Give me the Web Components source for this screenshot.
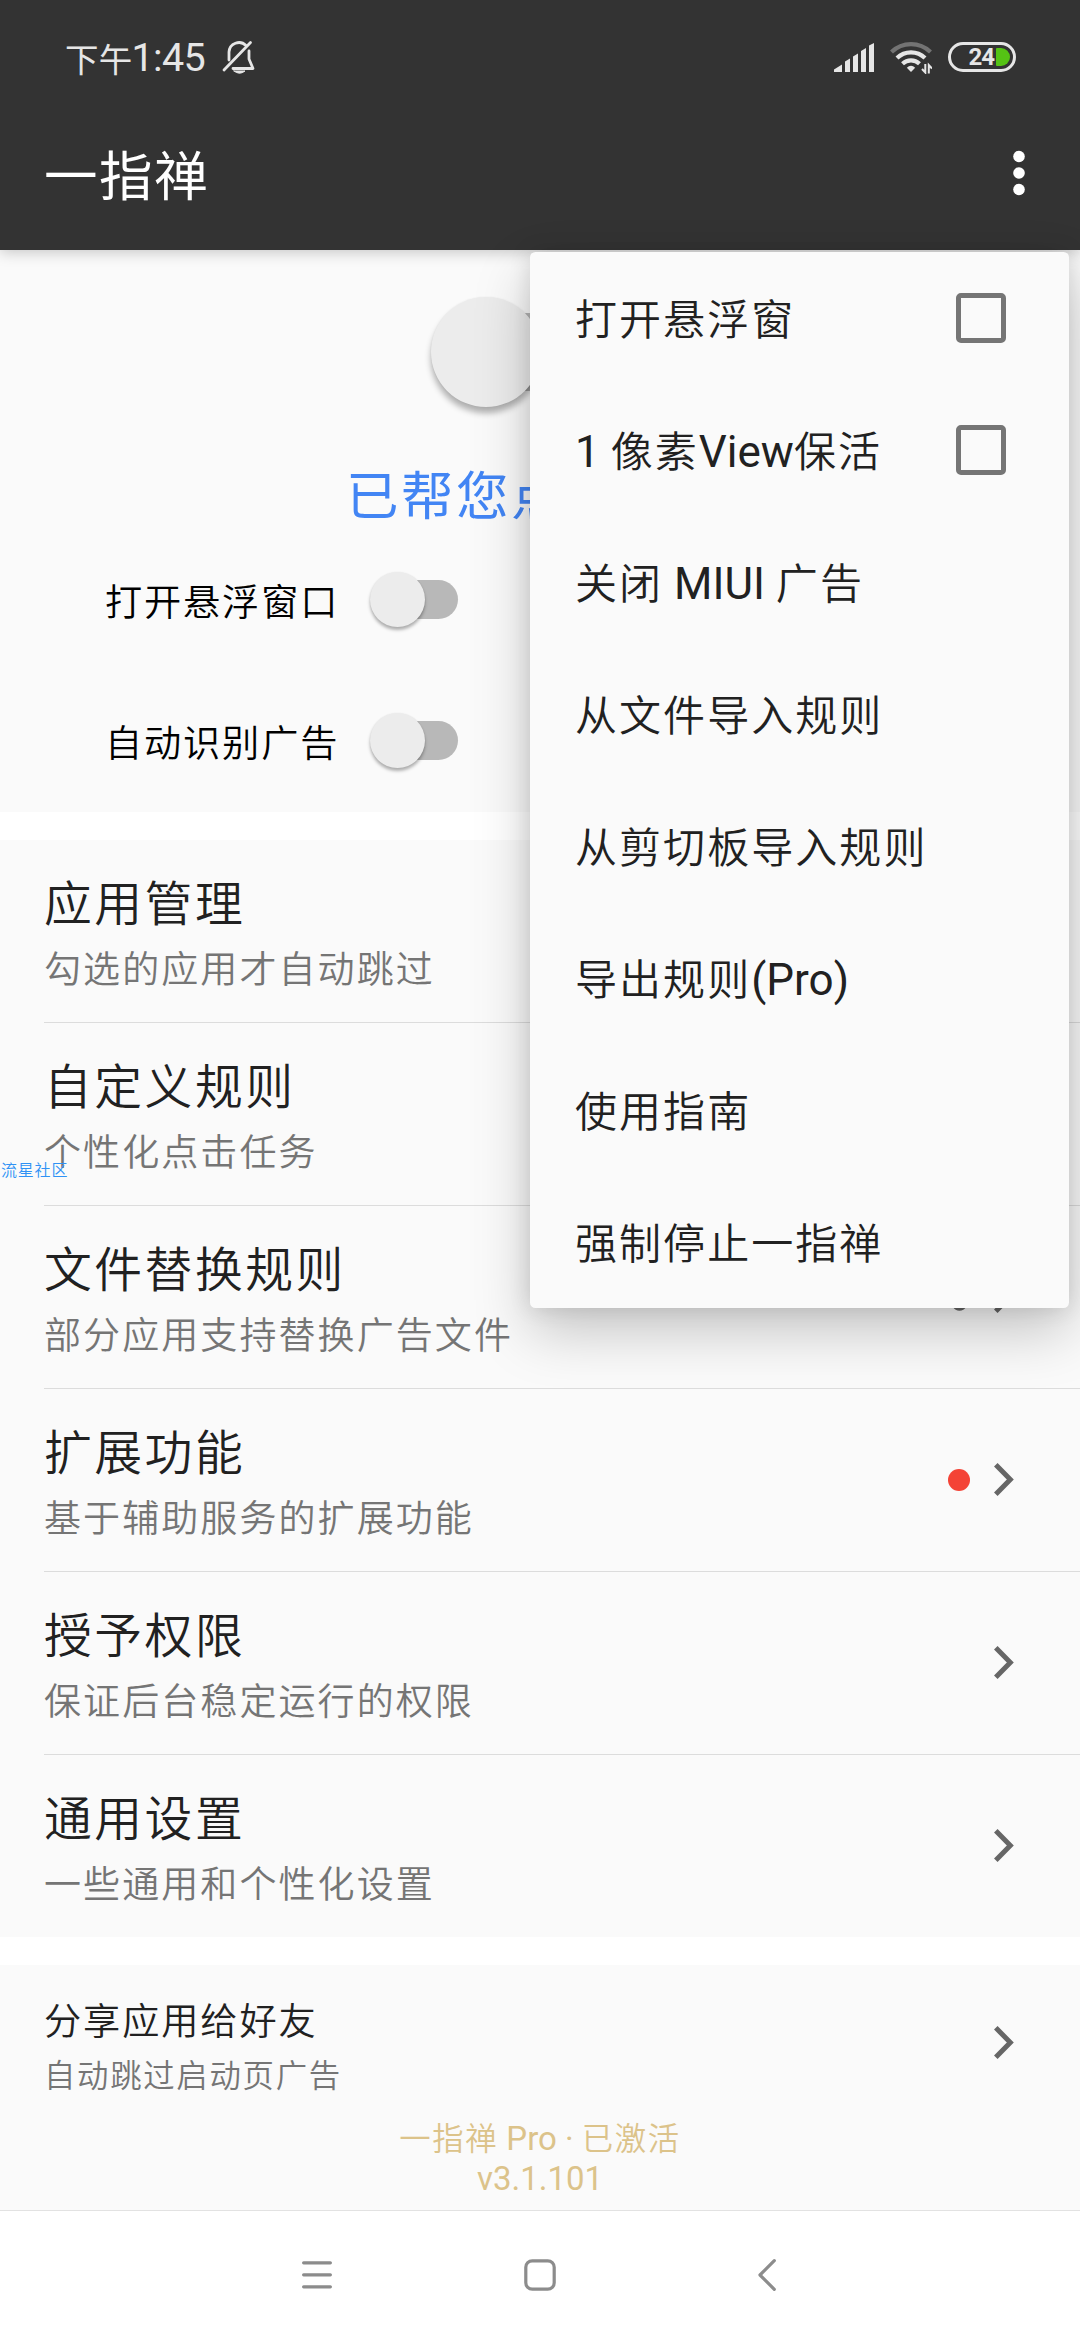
<!DOCTYPE html>
<html lang="zh-CN">
<head>
<meta charset="utf-8">
<title>一指禅</title>
<style>
body{margin:0;background:#fff;font-family:"Noto Sans CJK SC",Roboto,sans-serif;font-weight:350;color:#212121;width:1080px;height:2340px;overflow:hidden}
</style>
</head>
<body>
<app-screen></app-screen>
<script>
const define = (name, html) => {
  const t = document.createElement('template');
  t.innerHTML = html;
  customElements.define(name, class extends HTMLElement {
    constructor() {
      super();
      this.attachShadow({ mode: 'open' }).appendChild(t.content.cloneNode(true));
    }
  });
};

// Latin run set in Roboto inside a CJK line
define('latin-run', `<style>:host{display:inline;font-family:Roboto,sans-serif;font-weight:400;font-size:var(--latin,44px);letter-spacing:0;line-height:0;white-space:pre}</style><slot></slot>`);

define('status-bar', `<style>
:host{display:flex;align-items:center;box-sizing:border-box;height:96px;padding:18px 64px 0 65px;color:#e6e6e6}
.time{display:flex;align-items:center;font-size:33.500px;letter-spacing:.300px;font-weight:400;line-height:40px;margin-top:2px}
.time b{font:400 39.500px/40px Roboto,sans-serif;letter-spacing:-.700px;margin-left:-1px}
.bell{margin-left:17px}
.right{margin-left:auto;display:flex;align-items:center}
svg{display:block}
.bat{box-sizing:border-box;width:68px;height:30px;border:3px solid #e6e6e6;border-radius:15px;display:flex;align-items:center;justify-content:flex-end;padding-right:3px;margin-left:16px}
.bat span{font:700 24px/24px Roboto,sans-serif;letter-spacing:-1px;color:#e6e6e6;margin-right:2px}
.bat i{width:14px;height:18px;background:#55c314;border-radius:1px 9px 9px 1px}
</style>
<div class="time">下午<b>1:45</b></div>
<svg class="bell" width="34" height="34" viewBox="0 0 34 34" fill="none" stroke="#e6e6e6" stroke-width="2.8" stroke-linecap="round" stroke-linejoin="round">
<path d="M7 20V12A10 10 0 0 1 24 5.5"/><path d="M27 11V19L31 28.5H11" /><path d="M2 30L28.5 2.5"/><path d="M12 31H23Q17.500 35.500 12 31Z" fill="#e6e6e6" stroke-width="1"/></svg>
<div class="right">
<svg width="40" height="29" viewBox="0 0 40 29" fill="#e6e6e6"><path d="M0 29V26.500L8 21.500V29ZM11 29V18.500L16 15.500V29ZM19 29V13.500L24 10.500V29ZM27 29V8L32 5V29ZM35 29V2.500L40 0V29Z"/></svg>
<svg style="margin-left:16px" width="42" height="33" viewBox="0 0 42 33" fill="none" stroke="#e6e6e6" stroke-width="4.200">
<path d="M1.500 11A28 28 0 0 1 40.500 11" stroke="#737373"/><path d="M7 17A20 20 0 0 1 35 17"/><path d="M12.500 22.800A12.500 12.500 0 0 1 29.500 22.800"/><path d="M21 31L16.800 26.800Q21 22.500 25.200 26.800Z" fill="#e6e6e6" stroke="none"/>
<path d="M35.300 23V31.500L32 28M38.800 32.500V24L42 27.500" stroke-width="2"/></svg>
<div class="bat"><span>24</span><i></i></div>
</div>`);

define('app-bar', `<style>
:host{display:block;height:250px;background:#333;color:#fff;position:relative;z-index:1;box-shadow:0 2px 14px rgba(0,0,0,.22)}
.bar{display:flex;align-items:center;justify-content:space-between;height:154px;padding:0 55px 0 44px}
h1{margin:0;font-weight:400;font-size:53.500px;letter-spacing:1.600px;line-height:80px}
svg{display:block}
</style>
<status-bar></status-bar>
<div class="bar"><h1><slot></slot></h1>
<svg width="12" height="46" fill="#fff"><circle cx="6" cy="6.500" r="5.800"/><circle cx="6" cy="23" r="5.800"/><circle cx="6" cy="39.500" r="5.800"/></svg></div>`);

define('toggle-switch', `<style>
:host{--d:55px;display:flex;align-items:center;width:calc(var(--d)*1.600);height:var(--d)}
.track{display:flex;align-items:center;width:calc(var(--d)*1.100);height:calc(var(--d)*.709);margin-left:calc(var(--d)*.500);border-radius:0 99px 99px 0;background:#b8b8b8}
.thumb{flex:none;width:var(--d);height:var(--d);margin-left:calc(var(--d)*-.500);border-radius:50%;background:#ececec;box-shadow:0 calc(var(--d)*.055) calc(var(--d)*.060) rgba(0,0,0,.3),0 0 2px rgba(0,0,0,.060)}
</style><div class="track"><div class="thumb"></div></div>`);

define('switch-row', `<style>
:host{display:flex;align-items:center;height:141px;padding-left:105px;color:#000;font-size:37.200px;letter-spacing:1.850px;line-height:50px}
.l{width:264.500px;padding-top:1px}
toggle-switch{margin-top:1px}
</style><div class="l"><slot></slot></div><toggle-switch></toggle-switch>`);

define('main-panel', `<style>
:host{display:flex;flex-direction:column;height:562px;background:#fafafa}
.big{--d:110px;margin:47px 0 0 431px}
.count{color:#4285f4;font-weight:400;font-size:52.500px;letter-spacing:2.500px;line-height:70px;margin:50px 0 5.500px 346px}
.first{margin-top:-4px}
</style>
<toggle-switch class="big"></toggle-switch><div class="count">已帮您点</div>
<switch-row class="first">打开悬浮窗口</switch-row><switch-row>自动识别广告</switch-row>`);

define('chevron-icon', `<style>:host{display:block;padding-bottom:1px}svg{display:block}</style><svg width="20" height="33" viewBox="0 0 20 33" fill="none" stroke="#666" stroke-width="5"><path d="M1.800 1.800L16.300 16.500L1.800 31.200"/></svg>`);

define('list-row', `<style>
:host{display:flex;align-items:center;height:182px;padding-right:66px;margin-left:44px}
:host([line]){border-bottom:1px solid #dcdcdc}
.t{flex:1;align-self:flex-start;padding-top:31px}
.a{font-size:47.800px;letter-spacing:2.500px;line-height:60px}
.b{font-size:37px;letter-spacing:2.080px;line-height:48px;margin-top:12px;color:#757575}
.m{margin-right:24px}
:host([compact]){height:156px}
:host([compact]) .t{padding-top:30px}
:host([compact]) .a{font-size:37.200px;letter-spacing:1.900px;line-height:48px}
:host([compact]) .b{font-size:31.400px;letter-spacing:1.700px;line-height:40px;margin-top:11px}
</style><div class="t"><div class="a"><slot></slot></div><div class="b"><slot name="sub"></slot></div></div><div class="m"><slot name="mark"></slot></div><chevron-icon></chevron-icon>`);

define('nav-bar', `<style>
:host{display:flex;align-items:center;border-top:1px solid #e2e2e2;background:#fff;box-sizing:border-box;padding:0 0 2px 302px;height:130px}
svg{display:block;fill:none;stroke:#8c8c8c;stroke-width:3.200;stroke-linecap:round;stroke-linejoin:round}
</style>
<svg width="30" height="32"><path d="M1.600 3.800H28.400M1.600 15.800H28.400M1.600 27.800H28.400"/></svg>
<svg style="margin-left:192px" width="32" height="32"><rect x="1.800" y="1.800" width="28.400" height="28.400" rx="6.500"/></svg>
<svg style="margin-left:202px" width="19" height="32"><path d="M16.300 1.700L2 16L16.300 30.300"/></svg>`);

define('menu-item', `<style>
:host{display:flex;align-items:center;justify-content:space-between;height:132px;padding:0 63px 0 45px;font-size:42px;letter-spacing:2.060px;line-height:60px;white-space:pre}
span{padding-bottom:2px}
i{display:none;box-sizing:border-box;width:50px;height:50px;border:5.500px solid #757575;border-radius:5px}
:host([check]) i{display:block}
</style><span><slot></slot></span><i></i>`);

// Overflow menu floating over the page
define('popup-menu', `<style>
:host{display:block;position:absolute;z-index:2;left:530px;top:252px;width:539px;border-radius:5.500px;background:#fafafa;box-shadow:0 24px 56px rgba(0,0,0,.21),0 0 22px rgba(0,0,0,.12)}
</style><slot></slot>`);

define('app-screen', `<style>
:host{display:flex;flex-direction:column;position:relative;width:1080px;height:2340px;overflow:hidden}
.list{background:#fafafa;margin:28px 0}
.foot{background:#fafafa;height:245px}
.ver{--latin:33px;color:#dcc38a;text-align:center;font-size:31.400px;letter-spacing:1.600px;line-height:40px;margin-top:-4px}
.dot{display:block;width:22px;height:22px;border-radius:50%;background:#f44336}
.ring{display:block;margin-right:1px}
.tag{position:absolute;z-index:3;left:1px;top:1157px;font-size:16px;letter-spacing:.800px;line-height:24px;color:#2f92f5;font-weight:350}
</style>
<app-bar>一指禅</app-bar>
<main-panel></main-panel>
<div class="list">
<list-row line>应用管理<span slot="sub">勾选的应用才自动跳过</span></list-row>
<list-row line>自定义规则<span slot="sub">个性化点击任务</span></list-row>
<list-row line>文件替换规则<span slot="sub">部分应用支持替换广告文件</span><svg slot="mark" class="ring" width="19" height="28" fill="none" stroke="#666" stroke-width="3.500"><ellipse cx="9.500" cy="14" rx="7.700" ry="12"/></svg></list-row>
<list-row line>扩展功能<span slot="sub">基于辅助服务的扩展功能</span><span slot="mark" class="dot"></span></list-row>
<list-row line>授予权限<span slot="sub">保证后台稳定运行的权限</span></list-row>
<list-row>通用设置<span slot="sub">一些通用和个性化设置</span></list-row>
</div>
<div class="foot">
<list-row compact>分享应用给好友<span slot="sub">自动跳过启动页广告</span></list-row>
<div class="ver">一指禅<latin-run> Pro · </latin-run>已激活<br><latin-run>v3.1.101</latin-run></div>
</div>
<nav-bar></nav-bar>
<popup-menu>
<menu-item check>打开悬浮窗</menu-item>
<menu-item check><latin-run>1 </latin-run>像素<latin-run>View</latin-run>保活</menu-item>
<menu-item>关闭<latin-run> MIUI </latin-run>广告</menu-item>
<menu-item>从文件导入规则</menu-item>
<menu-item>从剪切板导入规则</menu-item>
<menu-item>导出规则<latin-run>(Pro)</latin-run></menu-item>
<menu-item>使用指南</menu-item>
<menu-item>强制停止一指禅</menu-item>
</popup-menu>
<div class="tag">流星社区</div>`);
</script>
</body>
</html>
